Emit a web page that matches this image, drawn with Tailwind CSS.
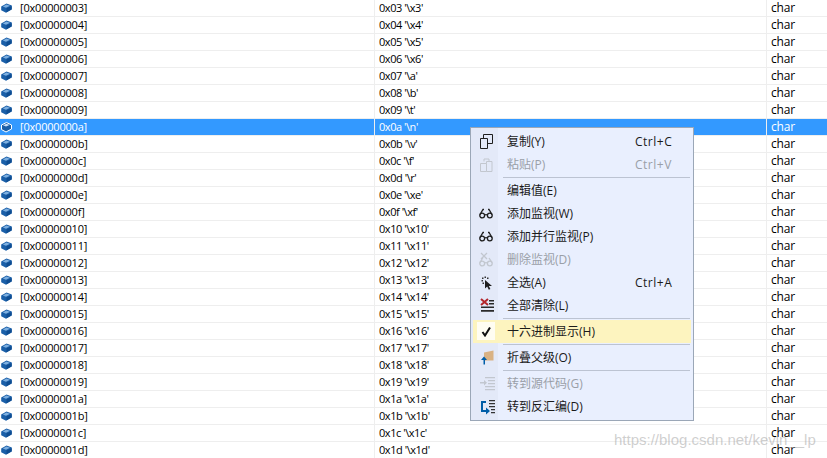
<!DOCTYPE html>
<html><head><meta charset="utf-8"><script src="https://cdn.jsdelivr.net/npm/@tailwindcss/browser@4"></script></head>
<body class="bg-white overflow-hidden">
<svg width="0" height="0" class="absolute"><defs>
<symbol id="b" viewBox="0 0 11 10"><path d="M0.200 3.500 5.500 0.600 10.800 2.600 10.800 6.500 5 9.800 0.200 7.200Z" fill="#1a5fa8"/><path d="M1.800 3.400 5.500 1.500 9 2.800 5 4.700Z" fill="#7fb0e0"/><path d="M5.500 5.200 10.600 3.300 10.600 6.300 5.500 9.300Z" fill="#0e4c90"/></symbol>
</defs></svg>
<div class="relative w-[827px] h-[458px] overflow-hidden bg-white text-[11px] leading-[16px] tracking-[-0.2px] text-black font-['Open_Sans','Noto_Sans_CJK_SC',sans-serif]">
<div class="flex flex-col [&>div]:flex [&>div]:h-[17px] [&>div]:border-b [&>div]:border-[#eeeeee] [&_svg]:w-[11px] [&_svg]:h-[10px] [&_svg]:mt-[3px] [&_svg]:ml-[1px] [&_svg]:mr-[8px] [&>div>div:nth-child(1)]:flex [&>div>div:nth-child(1)]:w-[375px] [&>div>div:nth-child(1)]:border-r [&>div>div:nth-child(1)]:border-[#eeeeee] [&>div>div:nth-child(2)]:w-[392px] [&>div>div:nth-child(2)]:pl-[4px] [&>div>div:nth-child(2)]:tracking-[-0.45px] [&>div>div:nth-child(2)]:border-r [&>div>div:nth-child(2)]:border-[#eeeeee] [&>div>div:nth-child(3)]:pl-[4px] [&>div>div:nth-child(3)]:text-[12px]">
<div><div><svg><use href="#b"/></svg>[0x00000003]</div><div>0x03 '\x3'</div><div>char</div></div>
<div><div><svg><use href="#b"/></svg>[0x00000004]</div><div>0x04 '\x4'</div><div>char</div></div>
<div><div><svg><use href="#b"/></svg>[0x00000005]</div><div>0x05 '\x5'</div><div>char</div></div>
<div><div><svg><use href="#b"/></svg>[0x00000006]</div><div>0x06 '\x6'</div><div>char</div></div>
<div><div><svg><use href="#b"/></svg>[0x00000007]</div><div>0x07 '\a'</div><div>char</div></div>
<div><div><svg><use href="#b"/></svg>[0x00000008]</div><div>0x08 '\b'</div><div>char</div></div>
<div><div><svg><use href="#b"/></svg>[0x00000009]</div><div>0x09 '\t'</div><div>char</div></div>
<div class="bg-[#3399ff] text-white"><div><svg class="overflow-visible"><path d="M0.500 3 5.500 0.500 10.500 3 10.500 7 5 10 0.500 7.500Z" fill="#1a5fa8" stroke="#fff" stroke-width="1"/><path d="M2 3.200 5.500 1.800 8.500 3 5 4.600Z" fill="#cfe2f7"/></svg>[0x0000000a]</div><div>0x0a '\n'</div><div>char</div></div>
<div><div><svg><use href="#b"/></svg>[0x0000000b]</div><div>0x0b '\v'</div><div>char</div></div>
<div><div><svg><use href="#b"/></svg>[0x0000000c]</div><div>0x0c '\f'</div><div>char</div></div>
<div><div><svg><use href="#b"/></svg>[0x0000000d]</div><div>0x0d '\r'</div><div>char</div></div>
<div><div><svg><use href="#b"/></svg>[0x0000000e]</div><div>0x0e '\xe'</div><div>char</div></div>
<div><div><svg><use href="#b"/></svg>[0x0000000f]</div><div>0x0f '\xf'</div><div>char</div></div>
<div><div><svg><use href="#b"/></svg>[0x00000010]</div><div>0x10 '\x10'</div><div>char</div></div>
<div><div><svg><use href="#b"/></svg>[0x00000011]</div><div>0x11 '\x11'</div><div>char</div></div>
<div><div><svg><use href="#b"/></svg>[0x00000012]</div><div>0x12 '\x12'</div><div>char</div></div>
<div><div><svg><use href="#b"/></svg>[0x00000013]</div><div>0x13 '\x13'</div><div>char</div></div>
<div><div><svg><use href="#b"/></svg>[0x00000014]</div><div>0x14 '\x14'</div><div>char</div></div>
<div><div><svg><use href="#b"/></svg>[0x00000015]</div><div>0x15 '\x15'</div><div>char</div></div>
<div><div><svg><use href="#b"/></svg>[0x00000016]</div><div>0x16 '\x16'</div><div>char</div></div>
<div><div><svg><use href="#b"/></svg>[0x00000017]</div><div>0x17 '\x17'</div><div>char</div></div>
<div><div><svg><use href="#b"/></svg>[0x00000018]</div><div>0x18 '\x18'</div><div>char</div></div>
<div><div><svg><use href="#b"/></svg>[0x00000019]</div><div>0x19 '\x19'</div><div>char</div></div>
<div><div><svg><use href="#b"/></svg>[0x0000001a]</div><div>0x1a '\x1a'</div><div>char</div></div>
<div><div><svg><use href="#b"/></svg>[0x0000001b]</div><div>0x1b '\x1b'</div><div>char</div></div>
<div><div><svg><use href="#b"/></svg>[0x0000001c]</div><div>0x1c '\x1c'</div><div>char</div></div>
<div><div><svg><use href="#b"/></svg>[0x0000001d]</div><div>0x1d '\x1d'</div><div>char</div></div>
</div>

<div class="absolute left-[470px] top-[127px] w-[224px] h-[294px] border border-[#9ba7b7] bg-[#e9effe] flex flex-col pt-[2px] text-[12px] tracking-normal text-[#1a1a1a]">
  <div class="absolute left-0 top-0 bottom-0 w-[27px] bg-[#e3e9f8]"></div>
  <div class="relative flex flex-col [&>div]:flex [&>div]:items-center [&>div]:h-[23px] [&>div]:pl-[36px] [&>hr]:ml-[32px] [&>hr]:mr-[3px] [&>hr]:my-[1px] [&>hr]:border-[#bcc3d2]">
    <div><svg class="absolute left-[9px] w-[13px] h-[15px]" viewBox="0 0 13 15" fill="none" stroke="#1e1e1e"><path d="M.5 4.500h7v10h-7zM3.500 4V.5h9v9H8"/></svg><span>复制(Y)</span><span class="ml-auto w-[58px] tracking-[0.5px]">Ctrl+C</span></div>
    <div class="text-[#9a9fa8]"><svg class="absolute left-[9px] w-[13px] h-[15px]" viewBox="0 0 13 15" fill="none" stroke="#c2c7cf"><path d="M.5 6.500h6v8h-6zM6.500 6.500V4.500h5.500v10H6.500M4 4.500V2h5v2.500"/></svg><span>粘贴(P)</span><span class="ml-auto w-[58px] tracking-[0.5px]">Ctrl+V</span></div>
    <hr>
    <div><span>编辑值(E)</span></div>
    <div><svg class="absolute left-[8px] w-[14px] h-[11px]" viewBox="0 0 14 11" fill="none" stroke="#1e1e1e" stroke-width="1.300"><circle cx="3.200" cy="7.500" r="2.400"/><circle cx="10.800" cy="7.500" r="2.400"/><path d="M5.500 7q1.500-.9 3 0M1 6.500 4 1.500h1M13 6.500 10 1.500H9"/></svg><span>添加监视(W)</span></div>
    <div><svg class="absolute left-[8px] w-[14px] h-[11px]" viewBox="0 0 14 11" fill="none" stroke="#1e1e1e" stroke-width="1.300"><circle cx="3.200" cy="7.500" r="2.400"/><circle cx="10.800" cy="7.500" r="2.400"/><path d="M5.500 7q1.500-.9 3 0M1 6.500 4 1.500h1M13 6.500 10 1.500H9"/></svg><span>添加并行监视(P)</span></div>
    <div class="text-[#9a9fa8]"><svg class="absolute left-[8px] w-[14px] h-[15px]" viewBox="0 0 14 15" fill="none" stroke="#c2c7cf" stroke-width="1.300"><circle cx="3.200" cy="11.500" r="2.400"/><circle cx="10.800" cy="11.500" r="2.400"/><path d="M5.500 11q1.500-.9 3 0M1 10.500 4 5.500M13 10.500 10 6M2 1l6 6M8 1 2 7"/></svg><span>删除监视(D)</span></div>
    <div><svg class="absolute left-[10px] w-[12px] h-[14px]" viewBox="0 0 12 14"><path d="M4 4v8.500l2.200-2 1.600 3.200 1.600-.8-1.600-3H11Z" fill="#1e1e1e"/><path d="M1 1.500h1.500V3H1zM3.500 .5H5V2H3.500zM6 1.500h1.500V3H6zM.5 4H2v1.500H.5zM1.500 6.500H3V8H1.500z" fill="#333"/></svg><span>全选(A)</span><span class="ml-auto w-[58px] tracking-[0.5px]">Ctrl+A</span></div>
    <div><svg class="absolute left-[9px] w-[15px] h-[16px]" viewBox="0 0 15 16"><path d="M1 1l7 6M8 1 1 7" stroke="#b3262b" stroke-width="2"/><path d="M9 2h5v1.500H9zM9 5h5v1.500H9zM1 8.500h13V10H1zM1 12h13v1.800H1z" fill="#2a2a2a"/></svg><span>全部清除(L)</span></div>
    <hr>
    <div class="relative mx-[2px] !pl-[34px] bg-[#fdf4bf]"><span class="absolute left-[4px] top-[2px] w-[18px] h-[18px] bg-[#fffdf2] flex items-center justify-center"><svg class="w-[11px] h-[11px]" viewBox="0 0 11 11" fill="none" stroke="#111" stroke-width="2"><path d="M1.500 6 4 9.500 9 1.500"/></svg></span><span>十六进制显示(H)</span></div>
    <hr>
    <div><svg class="absolute left-[9px] w-[15px] h-[15px]" viewBox="0 0 15 15"><path d="M4 2.500 13.500 .5V10.500H5.500L4 12Z" fill="#d9b284"/><path d="M3.500 14.500V10H1l3-3.500L7 10H5v4.500Z" fill="#005ea8"/></svg><span>折叠父级(O)</span></div>
    <hr>
    <div class="text-[#9a9fa8]"><svg class="absolute left-[9px] w-[16px] h-[16px]" viewBox="0 0 16 16"><path d="M5 1h10v1.300H5zM8 4h7v1.300H8zM8 7h7v1.300H8zM5 10h10v1.300H5zM5 13h10v1.300H5z" fill="#c2c7cf"/><path d="M0 6h4V4l3 2.700-3 2.700v-2H0z" fill="#c2c7cf"/></svg><span>转到源代码(G)</span></div>
    <div><svg class="absolute left-[9px] w-[16px] h-[16px]" viewBox="0 0 16 16"><path d="M9 1h6v1.300H9zM9 4h6v1.300H9zM9 7h6v1.300H9zM11 10h4v1.300h-4zM11 13h4v1.300h-4z" fill="#333"/><path d="M1 2h5v2H3v7h3V8.500l4 3.500-4 3.500V13H1Z" fill="#005ea8"/></svg><span>转到反汇编(D)</span></div>
  </div>
</div>

<div class="absolute left-[614px] top-[431px] text-[15px] leading-[18px] tracking-normal text-[#a0a0a0]/50 font-['Liberation_Sans',sans-serif]">https://blog.csdn.net/kevin__lp</div>
</div>
</body></html>
